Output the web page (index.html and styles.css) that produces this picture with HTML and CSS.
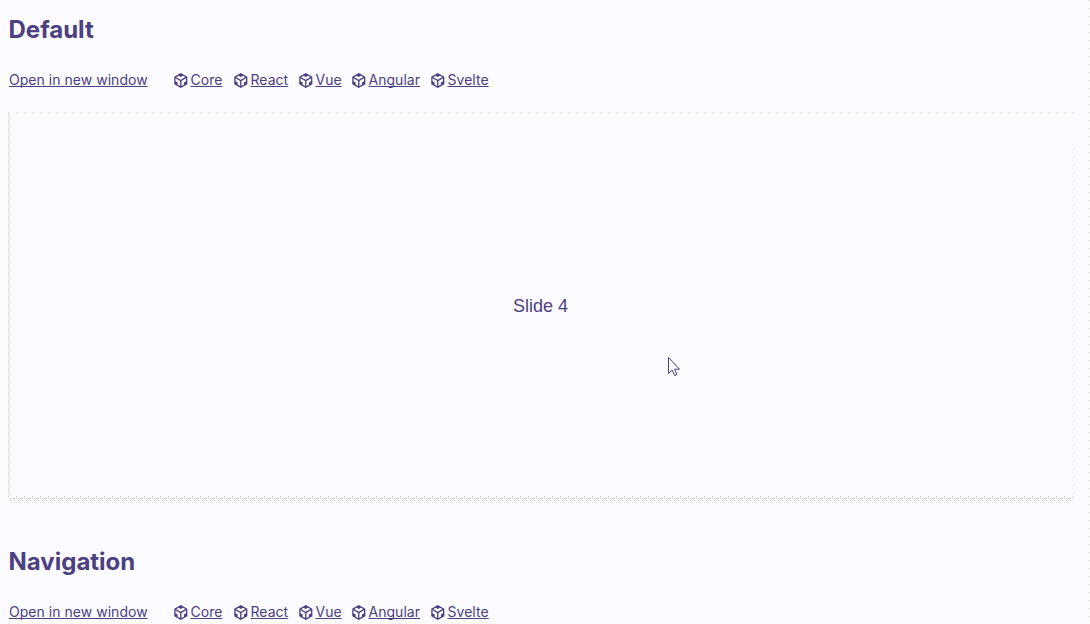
FILE: index.html
```html
<!DOCTYPE html>
<html lang="en">
<head>
<meta charset="utf-8">
<title>Slides</title>
<link rel="stylesheet" href="styles.css">
</head>
<body>
<svg class="defs" aria-hidden="true"><symbol id="box" viewBox="0 0 24 24"><path d="M2 6l10.455-6L22.91 6 23 17.95 12.455 24 2 18V6zm2.088 2.481v4.757l3.345 1.86v3.516l3.972 2.296v-8.272L4.088 8.481zm16.739 0l-7.317 4.157v8.272l3.972-2.296V15.1l3.345-1.861V8.48zM5.134 6.601l7.303 4.144 7.32-4.18-3.871-2.197-3.41 1.945-3.43-1.968L5.133 6.6z"/></symbol></svg>
<main class="page">
<section class="demo">
<h2 class="title">Default</h2>
<nav class="links">
<a class="open" href="#">Open in new window</a>
<span class="item core"><svg class="icon"><use href="#box"/></svg><a href="#">Core</a></span>
<span class="item react"><svg class="icon"><use href="#box"/></svg><a href="#">React</a></span>
<span class="item vue"><svg class="icon"><use href="#box"/></svg><a href="#">Vue</a></span>
<span class="item angular"><svg class="icon"><use href="#box"/></svg><a href="#">Angular</a></span>
<span class="item"><svg class="icon"><use href="#box"/></svg><a href="#">Svelte</a></span>
</nav>
<div class="frame"><span class="slide">Slide 4</span></div>
</section>
<section class="demo">
<h2 class="title">Navigation</h2>
<nav class="links">
<a class="open" href="#">Open in new window</a>
<span class="item core"><svg class="icon"><use href="#box"/></svg><a href="#">Core</a></span>
<span class="item react"><svg class="icon"><use href="#box"/></svg><a href="#">React</a></span>
<span class="item vue"><svg class="icon"><use href="#box"/></svg><a href="#">Vue</a></span>
<span class="item angular"><svg class="icon"><use href="#box"/></svg><a href="#">Angular</a></span>
<span class="item"><svg class="icon"><use href="#box"/></svg><a href="#">Svelte</a></span>
</nav>
</section>
</main>
<svg class="cursor" viewBox="0 0 13 20"><path d="M.5.5v16l3.7-3.4 2.5 5.4 2.3-1-2.4-5.3h4.9z"/></svg>
</body>
</html>
```
FILE: styles.css
```css
body {
  margin: 0;
  height: 624px;
  overflow: hidden;
  background: #fcfbff;
  color: #4b4080;
  font-family: Inter, sans-serif;
}
.defs { position: absolute; width: 0; height: 0; }
.page {
  box-sizing: border-box;
  width: 1089px;
  height: 624px;
  padding: 14px 14px 0 8px;
  background: repeating-linear-gradient(to bottom, #d0cbc8 0 1px, transparent 1px 8px) 1088px 0 / 1px 100% no-repeat;
}
.title { margin: 0; padding-left: 0.5px; font-size: 24px; line-height: 32px; font-weight: 700; }
.links {
  display: flex;
  align-items: center;
  height: 20px;
  margin-top: 24px;
  padding-left: 1px;
  font-size: 14px;
  line-height: 20px;
  letter-spacing: 0.03px;
}
.links a {
  color: inherit;
  text-underline-offset: 1px;
  text-decoration-thickness: 1px;
  text-decoration-skip-ink: none;
}
.open { width: 164px; }
.item { display: flex; align-items: center; gap: 2.5px; }
.core { width: 60px; }
.react { width: 65px; }
.vue { width: 53px; }
.angular { width: 79px; }
.icon { width: 15px; height: 15px; flex: none; fill: currentColor; }
.frame {
  box-sizing: border-box;
  display: flex;
  align-items: center;
  justify-content: center;
  height: 389px;
  margin: 22px 0 45px;
  padding: 0 2px 2px 0;
  background:
    repeating-linear-gradient(to right, #d0cbc8 0 1px, transparent 1px 8px) 0 0 / 100% 1px no-repeat,
    repeating-linear-gradient(to bottom, #d0cbc8 0 1px, transparent 1px 2px) 0 0 / 1px 386px no-repeat,
    repeating-linear-gradient(to right, #d0cbc8 0 1px, transparent 1px 8px) 0 384px / 1066px 1px no-repeat,
    repeating-linear-gradient(to right, #d0cbc8 0 1px, transparent 1px 2px, #d0cbc8 2px 5px, transparent 5px 6px, #d0cbc8 6px 7px, transparent 7px 8px) 2px 386px / 1064px 1px no-repeat,
    repeating-linear-gradient(to right, #d0cbc8 0 1px, transparent 1px 4px) 2px 388px / 1064px 1px no-repeat,
    repeating-linear-gradient(to bottom, #d0cbc8 0 1px, transparent 1px 8px) 100% 36px / 1px 350px no-repeat;
}
.slide { font: 18px/20px "Liberation Sans", Arial, sans-serif; }
.cursor {
  position: absolute;
  left: 668px;
  top: 357px;
  width: 13px;
  height: 20px;
  fill: #fcfbff;
  stroke: #4b4080;
}
```
